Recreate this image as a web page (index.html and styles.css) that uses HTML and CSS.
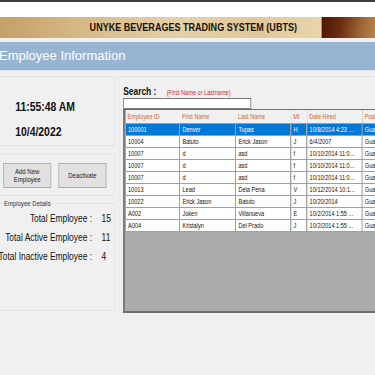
FILE: index.html
```html
<!DOCTYPE html>
<html lang="en">
<head>
  <meta charset="UTF-8" />
  <title>Employee Information</title>
  <link rel="stylesheet" href="styles.css">
</head>
<body>
  <div class="topline"></div>
  <div class="whitebar"></div>
  <!-- the form is drawn a bit narrower than its natural width, so squeeze it -->
  <div class="banner squeeze">
    <div class="banner-title">UNYKE BEVERAGES TRADING SYSTEM (UBTS)</div>
    <div class="banner-art"></div>
  </div>
  <div class="titlebar">Employee Information</div>

  <div class="main squeeze">
    <div class="left">
      <div class="panel clock">
        <div class="time">11:55:48 AM</div>
        <div class="date">10/4/2022</div>
      </div>
      <div class="panel actions">
        <button class="btn">Add New<br>Employee</button>
        <button class="btn">Deactivate</button>
      </div>
      <fieldset class="details">
        <legend>Employee Details</legend>
        <div class="stats">
          <span class="lbl">Total Employee :</span><span class="val">15</span>
          <span class="lbl">Total Active Employee :</span><span class="val">11</span>
          <span class="lbl">Total Inactive Employee :</span><span class="val">4</span>
        </div>
      </fieldset>
    </div>

    <div class="panel right">
      <div class="search-row">
        <span class="search-lbl">Search :</span>
        <span class="search-hint">(First Name or Lastname)</span>
      </div>
      <input class="search-box" type="text">
      <div class="grid">
        <table>
          <colgroup>
            <col class="c-id"><col class="c-first"><col class="c-last">
            <col class="c-mi"><col class="c-date"><col class="c-pos">
          </colgroup>
          <thead>
            <tr><th>Employee ID</th><th>First Name</th><th>Last Name</th><th>MI</th><th>Date Hired</th><th>Position</th></tr>
          </thead>
          <tbody>
            <tr class="sel"><td>100001</td><td>Denver</td><td>Tupas</td><td>H</td><td>10/8/2014 4:23 ...</td><td>Guard</td></tr>
            <tr><td>10004</td><td>Batuto</td><td>Erick Jason</td><td>J</td><td>6/4/2007</td><td>Guard</td></tr>
            <tr><td>10007</td><td>d</td><td>asd</td><td>f</td><td>10/10/2014 11:0...</td><td>Guard</td></tr>
            <tr><td>10007</td><td>d</td><td>asd</td><td>f</td><td>10/10/2014 11:0...</td><td>Guard</td></tr>
            <tr><td>10007</td><td>d</td><td>asd</td><td>f</td><td>10/10/2014 11:0...</td><td>Guard</td></tr>
            <tr><td>10013</td><td>Lead</td><td>Dela Pena</td><td>V</td><td>10/12/2014 10:1...</td><td>Guard</td></tr>
            <tr><td>10022</td><td>Erick Jason</td><td>Batuto</td><td>J</td><td>10/20/2014</td><td>Guard</td></tr>
            <tr><td>A002</td><td>Joken</td><td>Villanueva</td><td>E</td><td>10/2/2014 1:55 ...</td><td>Guard</td></tr>
            <tr><td>A004</td><td>Kristalyn</td><td>Del Prado</td><td>J</td><td>10/2/2014 1:55 ...</td><td>Guard</td></tr>
          </tbody>
        </table>
      </div>
    </div>
  </div>
</body>
</html>
```

FILE: styles.css
```css
html, body {
  margin: 0;
  padding: 0;
  background: #f0f0f0;
  overflow: hidden;
  font-family: "Liberation Sans", Arial, sans-serif;
}
.squeeze {
  width: 469px;
  transform: scaleX(0.8);
  transform-origin: 0 0;
}
.topline {
  height: 2px;
  background: #3c3c3c;
}
.whitebar {
  height: 15px;
  background: #fff;
}
.banner {
  display: flex;
  height: 21px;
}
.banner-title {
  width: 402px;
  padding-left: 112px;
  box-sizing: border-box;
  background: linear-gradient(90deg, #c4a068 0%, #d6b886 25%, #e5d0a9 55%, #e0c89c 80%, #e8d5ac 100%);
  font-weight: bold;
  font-size: 11.3px;
  line-height: 21px;
  color: #1a1208;
  white-space: nowrap;
}
.banner-art {
  flex: 1;
  background: linear-gradient(100deg, #4e1505 0%, #6b2c10 35%, #9a6233 70%, #b8864f 100%);
}
.titlebar {
  margin-top: 4px;
  height: 28px;
  background: #97b4d3;
  border-bottom: 1px solid #dde5ee;
  color: #fff;
  font-size: 13px;
  line-height: 28px;
  text-indent: -1px;
}
.main {
  display: flex;
  gap: 4px;
  width: 520px;
  padding-top: 5px;
}
.left {
  width: 144px;
  flex: none;
  display: flex;
  flex-direction: column;
  gap: 8px;
}
.panel {
  border: 1px solid #e3e3e3;
  border-left: none;
  box-sizing: border-box;
}
.clock {
  height: 70px;
  padding: 22px 0 0 19px;
  font-weight: bold;
  font-size: 13px;
  color: #111;
}
.clock .date {
  margin-top: 10px;
}
.actions {
  height: 42px;
  display: flex;
  gap: 9px;
  padding: 8px 0 0 4px;
}
.btn {
  width: 60px;
  height: 25px;
  margin: 0;
  padding: 0;
  background: #e1e1e1;
  border: 1px solid #adadad;
  font-family: "Liberation Sans", Arial, sans-serif;
  font-size: 7.5px;
  line-height: 7.5px;
  color: #222;
}
.details {
  margin: -5px 0 0;
  padding: 4px 0 0;
  height: 112px;
  box-sizing: border-box;
  border: 1px solid #e3e3e3;
  border-left: none;
  min-width: 0;
}
.details legend {
  margin-left: 4px;
  padding: 0 1px;
  font-size: 7.5px;
  color: #333;
}
.stats {
  display: grid;
  grid-template-columns: 115px auto;
  column-gap: 12px;
  row-gap: 7px;
  font-size: 10.5px;
  color: #111;
}
.stats .lbl {
  justify-self: end;
  white-space: nowrap;
}
.right {
  flex: 1;
  height: 237px;
  padding: 8px 0 0 5px;
  border-left: 1px solid #e3e3e3;
}
.search-row {
  height: 13px;
  display: flex;
  align-items: baseline;
  gap: 13px;
}
.search-lbl {
  font-weight: bold;
  font-size: 10.5px;
  color: #111;
}
.search-hint {
  font-size: 7px;
  color: #e0262a;
}
.search-box {
  display: block;
  width: 160px;
  height: 11px;
  margin: 0;
  padding: 0;
  box-sizing: border-box;
  border: 1px solid #7a7a7a;
  background: #fff;
}
.grid {
  height: 204px;
  background: #ababab;
  border: 1px solid #6e6e6e;
  border-width: 1px 0 2px 2px;
  box-sizing: border-box;
}
table {
  width: 371px;
  border-collapse: collapse;
  table-layout: fixed;
  font-size: 7px;
}
.c-id { width: 68px; }
.c-first { width: 70px; }
.c-last { width: 69px; }
.c-mi { width: 20px; }
.c-date { width: 69px; }
.c-pos { width: 75px; }
th {
  height: 13px;
  padding: 0 0 0 3px;
  background: #f0f0f0;
  color: #d2642c;
  font-weight: normal;
  text-align: left;
  white-space: nowrap;
  overflow: hidden;
}
td {
  height: 11px;
  padding: 0 0 0 3px;
  background: #fff;
  color: #111;
  border: 1px solid #a0a0a0;
  white-space: nowrap;
  overflow: hidden;
}
tr.sel td {
  background: #0078d7;
  color: #fff;
}
```
